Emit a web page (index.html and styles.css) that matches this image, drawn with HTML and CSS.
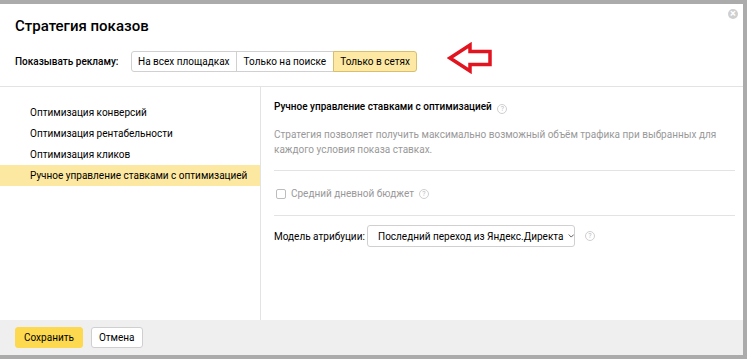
FILE: index.html
```html
<!DOCTYPE html>
<html lang="ru">
<head>
  <meta charset="UTF-8">
  <meta name="viewport" content="width=device-width, initial-scale=1.0">
  <title>Стратегия показов</title>
  <link rel="stylesheet" href="styles.css">
</head>
<body>
  <div class="dialog">
    <span class="close-btn">&times;</span>

    <div class="head">
      <h1>Стратегия показов</h1>
      <div class="show-row">
        <span class="show-label">Показывать рекламу:</span>
        <div class="segments">
          <button class="seg">На всех площадках</button>
          <button class="seg">Только на поиске</button>
          <button class="seg active">Только в сетях</button>
        </div>
        <svg class="arrow" width="46" height="32" viewBox="0 0 46 32">
          <polygon points="3,16 23,3 23,9.5 43,9.5 43,22.5 23,22.5 23,29" fill="none" stroke="#e2141f" stroke-width="3.5" stroke-linejoin="miter"/>
        </svg>
      </div>
    </div>

    <div class="body">
      <ul class="strategies">
        <li>Оптимизация конверсий</li>
        <li>Оптимизация рентабельности</li>
        <li>Оптимизация кликов</li>
        <li class="selected">Ручное управление ставками с оптимизацией</li>
      </ul>

      <div class="content">
        <h2>Ручное управление ставками с оптимизацией <span class="hint">?</span></h2>
        <p class="desc">Стратегия позволяет получить максимально возможный объём трафика при выбранных для каждого условия показа ставках.</p>
        <hr>
        <label class="check-row">
          <span class="check"></span>
          Средний дневной бюджет <span class="hint">?</span>
        </label>
        <hr>
        <div class="attr-row">
          <span>Модель атрибуции:</span>
          <div class="select">Последний переход из Яндекс.Директа
            <svg width="9" height="6" viewBox="0 0 9 6"><path d="M1 1l3.5 3.5L8 1" fill="none" stroke="#333" stroke-width="1.1"/></svg>
          </div>
          <span class="hint">?</span>
        </div>
      </div>
    </div>

    <div class="footer">
      <button class="btn btn-save">Сохранить</button>
      <button class="btn">Отмена</button>
    </div>
  </div>
</body>
</html>
```

FILE: styles.css
```css
* { margin: 0; padding: 0; box-sizing: border-box; }
body {
  font-family: Roboto, 'Noto Sans', sans-serif;
  font-size: 10px;
  color: #000;
  background: #ababab;
  padding-top: 4px;
  height: 359px;
  overflow: hidden;
  white-space: nowrap;
}
.dialog {
  position: relative;
  width: 743px;
  background: #fff;
}
.close-btn {
  position: absolute;
  top: 5px;
  right: 5px;
  width: 10px;
  height: 10px;
  border-radius: 50%;
  background: #cfcfcf;
  color: #fff;
  font-size: 11px;
  line-height: 10px;
  text-align: center;
  font-weight: bold;
}
.head {
  padding: 12px 15px 15px;
  border-bottom: 1px solid #e3e3e3;
}
h1 {
  font-size: 15px;
  font-weight: 500;
  line-height: 20px;
  margin-bottom: 15px;
}
.show-row {
  display: flex;
  align-items: center;
  height: 20px;
}
.show-label {
  font-weight: 500;
  width: 116px;
}
.segments {
  display: flex;
}
.seg {
  font-family: inherit;
  font-size: 10px;
  color: #000;
  height: 21px;
  padding: 0 7px;
  background: #fff;
  border: 1px solid #d0d0d0;
  margin-left: -1px;
}
.seg:first-child { border-radius: 3px 0 0 3px; margin-left: 0; padding: 0 6px; }
.seg:last-child { border-radius: 0 3px 3px 0; padding: 0 6px; }
.seg.active {
  background: #fde9a4;
  border-color: #d8bf6f;
  position: relative;
}
.arrow {
  margin-left: 30px;
  margin-top: -6px;
}
.body {
  display: flex;
  height: 233px;
}
.strategies {
  list-style: none;
  width: 261px;
  border-right: 1px solid #e3e3e3;
  padding-top: 15px;
}
.strategies li {
  line-height: 21px;
  padding-left: 30px;
}
.strategies li.selected {
  background: #fde8a2;
}
.content {
  flex: 1;
  padding: 12px 8px 0 13px;
}
h2 {
  font-size: 10px;
  font-weight: 500;
  line-height: 16px;
}
.hint {
  display: inline-block;
  width: 10px;
  height: 10px;
  border: 1px solid #cfcfcf;
  border-radius: 50%;
  color: #bdbdbd;
  font-size: 7px;
  line-height: 8px;
  text-align: center;
  font-weight: 400;
  vertical-align: -1px;
  margin-left: 3px;
}
.desc {
  color: #999;
  line-height: 15px;
  margin-top: 12px;
  white-space: normal;
}
hr {
  border: none;
  border-top: 1px solid #e3e3e3;
  margin-top: 13px;
}
.check-row {
  display: flex;
  align-items: center;
  gap: 5px;
  color: #999;
  line-height: 16px;
  margin: 15px 0 11px 2px;
}
.check-row .hint { margin-left: 0; }
.check {
  width: 10px;
  height: 10px;
  border: 1px solid #bdbdbd;
  border-radius: 2px;
}
.attr-row {
  display: flex;
  align-items: center;
  margin-top: 9px;
}
.attr-row > span:first-child { width: 93px; }
.select {
  display: flex;
  align-items: center;
  gap: 4px;
  height: 22px;
  width: 208px;
  padding-left: 10px;
  border: 1px solid #d0d0d0;
  border-radius: 3px;
}
.attr-row .hint { margin-left: 10px; }
.footer {
  display: flex;
  gap: 8px;
  height: 35px;
  padding: 7px 15px;
  background: #efefef;
}
.btn {
  font-family: inherit;
  font-size: 10px;
  color: #000;
  height: 21px;
  padding: 0 7px;
  background: #fff;
  border: 1px solid #cfcfcf;
  border-radius: 3px;
}
.btn-save {
  background: #fcd94f;
  border-color: #fcd94f;
  padding: 0 8px;
}
```
